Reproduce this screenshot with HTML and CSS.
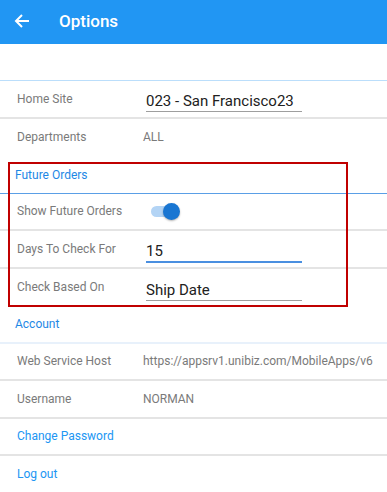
FILE: index.html
```html
<!DOCTYPE html>
<html lang="en">
  <head>
    <meta charset="UTF-8" />
    <meta name="viewport" content="width=device-width, initial-scale=1.0" />
    <title>Options</title>
    <link rel="stylesheet" href="styles.css">
  </head>
  <body>
    <div class="toolbar">
      <svg class="toolbar__back" width="16" height="16" viewBox="0 0 16 16">
        <path d="M15 8H2M8 2L2 8l6 6" fill="none" stroke="#fff" stroke-width="2" />
      </svg>
      <span class="toolbar__title">Options</span>
    </div>

    <div class="section section--top"></div>

    <div class="row">
      <span class="row__label">Home Site</span>
      <span class="row__input">023 - San Francisco23</span>
    </div>
    <div class="row row--plain">
      <span class="row__label">Departments</span>
      <span class="row__value">ALL</span>
    </div>

    <div class="marked">
      <div class="section section--blue">Future Orders</div>
      <div class="row">
        <span class="row__label">Show Future Orders</span>
        <span class="switch"><span class="switch__thumb"></span></span>
      </div>
      <div class="row">
        <span class="row__label">Days To Check For</span>
        <span class="row__input row__input--focus">15</span>
      </div>
      <div class="row row--plain">
        <span class="row__label">Check Based On</span>
        <span class="row__input">Ship Date</span>
      </div>
    </div>

    <div class="section section--light">Account</div>
    <div class="row">
      <span class="row__label">Web Service Host</span>
      <span class="row__value">https://appsrv1.unibiz.com/MobileApps/v6</span>
    </div>
    <div class="row">
      <span class="row__label">Username</span>
      <span class="row__value">NORMAN</span>
    </div>
    <div class="row">
      <span class="row__link">Change Password</span>
    </div>
    <div class="row">
      <span class="row__link">Log out</span>
    </div>
  </body>
</html>
```

FILE: styles.css
```css
* {
  box-sizing: border-box;
}
body {
  margin: 0;
  font-family: Roboto, "Liberation Sans", sans-serif;
  background: #fff;
  overflow: hidden;
}

.toolbar {
  display: flex;
  align-items: center;
  height: 44px;
  padding-left: 14px;
  background-color: #2196f3;
  color: #fff;
}
.toolbar__back {
  margin-right: 29px;
  margin-top: -2px;
}
.toolbar__title {
  font-size: 17px;
  font-weight: 500;
  margin-top: -2px;
}

.section {
  display: flex;
  align-items: center;
  height: 37.5px;
  padding-left: 15px;
  font-size: 12px;
  color: #1e88e5;
}
.section--top {
  height: 37px;
  border-bottom: 1px solid #bbdefb;
}
.section--blue {
  border-bottom: 1px solid #5a9fe6;
  padding-top: 1px;
}
.section--light {
  border-bottom: 2px solid #e8f1fb;
}

.row {
  display: flex;
  align-items: center;
  height: 37.5px;
  padding-left: 17px;
  border-bottom: 2px solid #e4e4e4;
  font-size: 12px;
  color: #7a7a7a;
}
.row--plain {
  border-bottom: 0;
}
.row__label {
  width: 126px;
  flex-shrink: 0;
}
.row__value {
  color: #7a7a7a;
  white-space: nowrap;
}
.row__input {
  width: 156px;
  margin-left: 3px;
  margin-top: 5px;
  padding: 2px 0 1px;
  border-bottom: 1px solid #9e9e9e;
  font-size: 15px;
  color: #212121;
  white-space: nowrap;
}
.row__input--focus {
  border-bottom: 2px solid #4a8fe0;
}
.row__link {
  color: #2196f3;
}

.switch {
  position: relative;
  display: inline-block;
  width: 25px;
  height: 11px;
  margin-left: 8px;
  border-radius: 6px;
  background-color: #b3d4f5;
}
.switch__thumb {
  position: absolute;
  top: -3px;
  right: -4px;
  width: 17px;
  height: 17px;
  border-radius: 50%;
  background-color: #1976d2;
  box-shadow: 0 1px 2px rgba(0, 0, 0, 0.3);
}

.marked {
  position: relative;
}
.marked::after {
  content: "";
  position: absolute;
  top: 6px;
  left: 8px;
  width: 336px;
  bottom: -1px;
  border: 2px solid #c00000;
  pointer-events: none;
}
```
